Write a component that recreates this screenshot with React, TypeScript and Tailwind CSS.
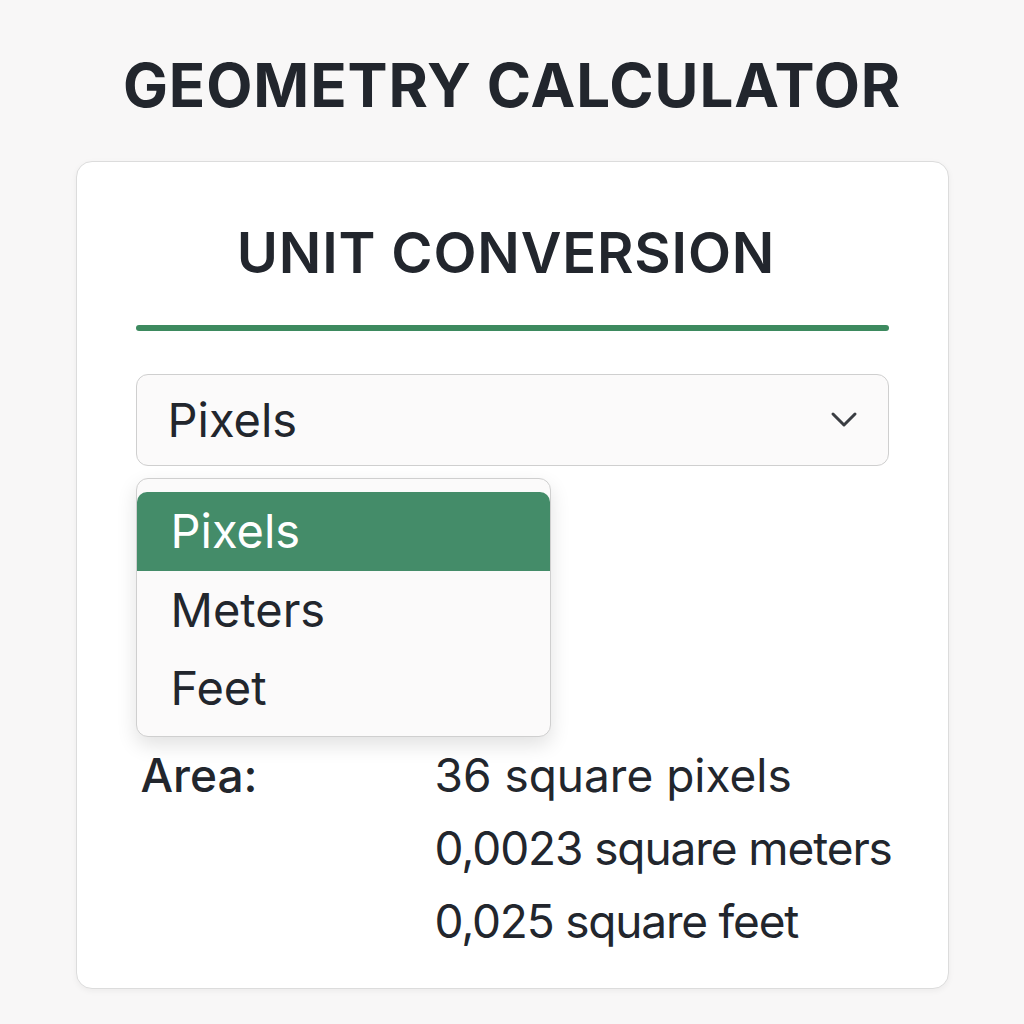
import React from "react";

export default function App() {
  return (
    <div className="w-[1024px] h-[1024px] bg-[#f8f7f7] flex flex-col items-center" style={{ fontFamily: "Inter, 'Noto Sans', sans-serif" }}>
      <h1 className="mt-[52px] shrink-0 text-[60px] leading-[66px] font-bold tracking-[0.015em] text-[#22262d]">GEOMETRY CALCULATOR</h1>
      <div className="mt-[43px] shrink-0 w-[873px] h-[828px] bg-white border border-[#dcdcdc] rounded-[16px] shadow-[0_2px_6px_rgba(0,0,0,0.05)] px-[59px] flex flex-col">
        <h2 className="mt-[60px] shrink-0 pr-[12px] text-center text-[56px] leading-[62px] font-semibold tracking-[0.015em] text-[#22262d]">UNIT CONVERSION</h2>
        <div className="mt-[41px] shrink-0 h-[6px] rounded-full bg-[#3d8a5f]" />
        <div className="relative mt-[43px] shrink-0">
          <div className="h-[92px] rounded-[12px] border border-[#cfcfcf] bg-[#fbfafa] flex items-center justify-between pl-[31px] pr-[30px]">
            <span className="text-[47px] text-[#22262d]">Pixels</span>
            <svg width="28" height="18" viewBox="0 0 28 18" fill="none">
              <path d="M3 3 L14 14 L25 3" stroke="#3a3d42" strokeWidth="3" strokeLinecap="round" strokeLinejoin="round" />
            </svg>
          </div>
          <div className="absolute left-0 top-[104px] w-[415px] h-[259px] rounded-[12px] border border-[#cfcfcf] bg-[#fbfafa] shadow-[0_8px_20px_rgba(0,0,0,0.12)] pt-[13px] z-10">
            <div className="h-[79px] bg-[#448c69] rounded-t-[10px] flex items-center pl-[34px] text-[47px] text-white">Pixels</div>
            <div className="h-[78px] flex items-center pl-[34px] text-[47px] text-[#22262d]">Meters</div>
            <div className="h-[78px] flex items-center pl-[34px] text-[47px] text-[#22262d]">Feet</div>
          </div>
        </div>
        <div className="mt-[273px] shrink-0 flex text-[46px] text-[#22262d] leading-[73px] whitespace-nowrap">
          <div className="w-[299px] shrink-0 pl-[5px] font-medium">Area:</div>
          <div className="flex flex-col">
            <span>36 square pixels</span>
            <span className="tracking-[-1.1px]">0,0023 square meters</span>
            <span className="tracking-[-1.2px]">0,025 square feet</span>
          </div>
        </div>
      </div>
    </div>
  );
}
